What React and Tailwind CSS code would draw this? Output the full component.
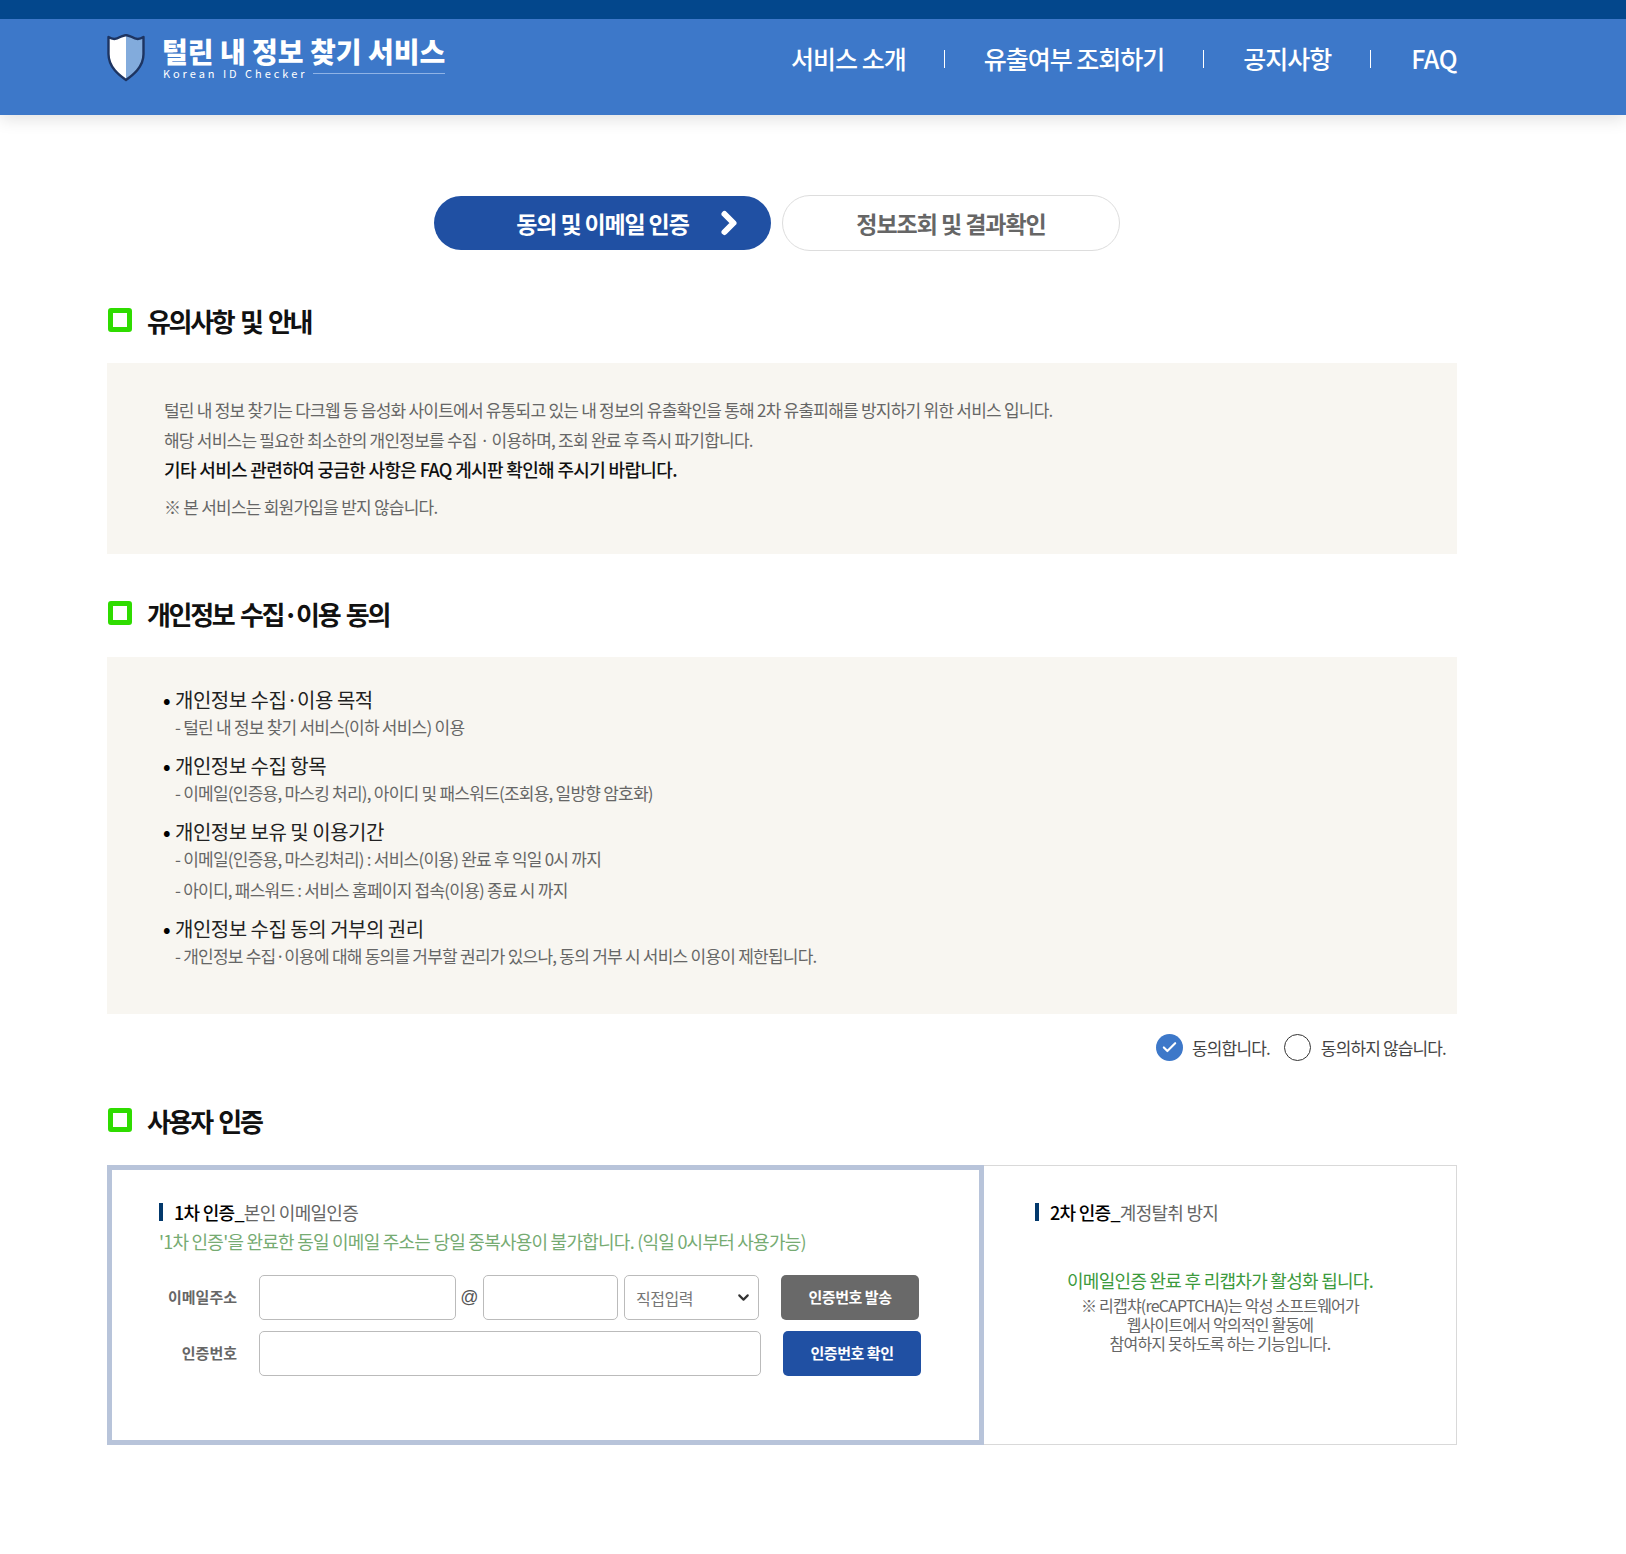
import React from "react";
import { ChevronRight, ChevronDown, Check } from "lucide-react";

const Shield = () => (
  <svg width="38" height="48" viewBox="0 0 38 48" className="shrink-0">
    <path d="M1.5 3 C6 5 9 5 12 3.5 C14.5 2.5 16.5 1.5 19 1 L19 46 C12 41 1.5 33 1.5 20 Z" fill="#ffffff" />
    <path d="M36.5 3 C32 5 29 5 26 3.5 C23.5 2.5 21.5 1.5 19 1 L19 46 C26 41 36.5 33 36.5 20 Z" fill="#82abdc" />
    <path d="M1.5 3 C6 6 10 5 13 3 C15 2 17 1.5 19 1 C21 1.5 23 2 25 3 C28 5 32 6 36.5 3 L36.5 20 C36.5 33 26 41 19 46 C12 41 1.5 33 1.5 20 Z" fill="none" stroke="#1d3461" strokeWidth="2.4" strokeLinejoin="round" />
  </svg>
);

const Heading = ({ children, className }) => (
  <div className={"flex items-center gap-[15px] pl-[1px] " + className}>
    <span className="mb-[3px] block h-[24px] w-[24px] rounded-[3px] border-[5px] border-[#2fdc00] bg-white" />
    <h2 className="m-0 text-[26px] leading-[36px] font-bold tracking-[-0.09em] [word-spacing:3px] text-[#111]">{children}</h2>
  </div>
);

const Bullet = ({ title, lines }) => (
  <div className="mb-[12px]">
    <div className="flex text-[20px] leading-[23px] tracking-[-0.025em] text-[#222]">
      <span className="w-[12px] font-bold text-black">•</span>
      {title}
    </div>
    {lines.map((l) => (
      <p key={l} className="m-0 pl-[12px] text-[17px] leading-[31px] tracking-[-0.045em] text-[#666]">{l}</p>
    ))}
  </div>
);

const SubTitle = ({ strong, rest }) => (
  <div className="flex items-center text-[18px] leading-[24px] tracking-[-0.04em]">
    <span className="mr-[11px] h-[18px] w-[4px] bg-[#03396c]" />
    <span className="font-medium text-black">{strong}</span>
    <span className="text-[#666]">{rest}</span>
  </div>
);

const inputCls = "h-[45px] rounded-[5px] border border-[#bbb] bg-white";

export default function App() {
  return (
    <div className="min-h-[1554px] bg-white font-['Noto_Sans_CJK_KR','Noto_Sans',sans-serif]">
      <header className="border-t-[19px] border-[#03478c] bg-[#3d78c9] pl-[107px] shadow-[0_4px_16px_rgba(0,0,0,0.12)]">
        <div className="flex h-[96px] w-[1350px] items-start justify-between">
          <div className="flex items-start gap-[17px] pt-[15px]">
            <Shield />
            <div className="-mt-[1px] w-[283px]">
              <div className="text-[28px] leading-[36px] font-black tracking-[0px] whitespace-nowrap text-white">털린 내 정보 찾기 서비스</div>
              <div className="-mt-[3px] flex items-center gap-[6px] pl-[1px]">
                <span className="text-[11px] leading-[14px] tracking-[0.27em] whitespace-nowrap text-white">Korean ID Checker</span>
                <span className="h-px flex-1 bg-[#8fb3e6]" />
              </div>
            </div>
          </div>
          <nav className="flex h-[80px] items-center text-[25px] font-medium tracking-[-0.04em] whitespace-nowrap text-white">
            <a className="pr-[38px]">서비스 소개</a>
            <span className="h-[18px] w-px bg-white" />
            <a className="px-[39px]">유출여부 조회하기</a>
            <span className="h-[18px] w-px bg-white" />
            <a className="px-[39px]">공지사항</a>
            <span className="h-[18px] w-px bg-white" />
            <a className="pl-[40px] tracking-[-0.02em]">FAQ</a>
          </nav>
        </div>
      </header>

      <main className="ml-[107px] w-[1350px]">
        <div className="flex items-center justify-center gap-[11px] pt-[80px] pr-[10px]">
          <div className="relative flex h-[54px] w-[337px] items-center justify-center rounded-full bg-[#2050a3] text-[23px] font-bold tracking-[-0.05em] text-white">
            동의 및 이메일 인증
            <ChevronRight className="absolute top-[9px] right-[24px]" size={36} strokeWidth={4} />
          </div>
          <div className="flex h-[56px] w-[338px] items-center justify-center rounded-full border border-[#ddd] bg-white text-[23px] font-bold tracking-[-0.045em] text-[#666]">
            정보조회 및 결과확인
          </div>
        </div>

        <Heading className="mt-[52px]">유의사항 및 안내</Heading>
        <section className="mt-[24px] h-[191px] bg-[#f8f6f1] pt-[32px] pr-[56px] pl-[57px]">
          <p className="m-0 text-[17px] leading-[30px] tracking-[-0.045em] text-[#666]">털린 내 정보 찾기는 다크웹 등 음성화 사이트에서 유통되고 있는 내 정보의 유출확인을 통해 2차 유출피해를 방지하기 위한 서비스 입니다.</p>
          <p className="m-0 text-[17px] leading-[30px] tracking-[-0.045em] text-[#666]">해당 서비스는 필요한 최소한의 개인정보를 수집ㆍ이용하며, 조회 완료 후 즉시 파기합니다.</p>
          <p className="m-0 text-[18px] leading-[28px] font-medium tracking-[-0.036em] text-[#111]">기타 서비스 관련하여 궁금한 사항은 FAQ 게시판 확인해 주시기 바랍니다.</p>
          <p className="m-0 mt-[9px] text-[17px] leading-[30px] tracking-[-0.045em] text-[#666]">※ 본 서비스는 회원가입을 받지 않습니다.</p>
        </section>

        <Heading className="mt-[42px]">개인정보 수집·이용 동의</Heading>
        <section className="mt-[25px] h-[357px] bg-[#f8f6f1] px-[56px] pt-[31px]">
          <Bullet title="개인정보 수집·이용 목적" lines={["- 털린 내 정보 찾기 서비스(이하 서비스) 이용"]} />
          <Bullet title="개인정보 수집 항목" lines={["- 이메일(인증용, 마스킹 처리), 아이디 및 패스워드(조회용, 일방향 암호화)"]} />
          <Bullet title="개인정보 보유 및 이용기간" lines={["- 이메일(인증용, 마스킹처리) : 서비스(이용) 완료 후 익일 0시 까지", "- 아이디, 패스워드 : 서비스 홈페이지 접속(이용) 종료 시 까지"]} />
          <Bullet title="개인정보 수집 동의 거부의 권리" lines={["- 개인정보 수집·이용에 대해 동의를 거부할 권리가 있으나, 동의 거부 시 서비스 이용이 제한됩니다."]} />
        </section>

        <div className="mt-[20px] flex items-center justify-end pr-[11px] text-[17px] tracking-[-0.05em] text-[#444]">
          <span className="flex h-[27px] w-[27px] items-center justify-center rounded-full bg-[#3d78c9]">
            <Check size={17} strokeWidth={3} className="text-white" />
          </span>
          <span className="mr-[14px] ml-[9px]">동의합니다.</span>
          <span className="h-[27px] w-[27px] rounded-full border border-[#333] bg-white" />
          <span className="ml-[10px]">동의하지 않습니다.</span>
        </div>

        <Heading className="mt-[42px]">사용자 인증</Heading>

        <section className="mt-[26px] flex h-[280px] border border-[#d9d9d9]">
          <div className="-my-px -ml-px h-[280px] w-[877px] shrink-0 border-[5px] border-[#b8c4da] bg-white pt-[30px] pl-[47px]">
            <SubTitle strong="1차 인증_" rest="본인 이메일인증" />
            <p className="m-0 mt-[3px] text-[18px] leading-[28px] tracking-[-0.042em] text-[#76ab72]">'1차 인증'을 완료한 동일 이메일 주소는 당일 중복사용이 불가합니다. (익일 0시부터 사용가능)</p>
            <div className="mt-[20px] flex items-center">
              <label className="w-[78px] shrink-0 text-right text-[15px] font-bold tracking-[0em] text-[#666]">이메일주소</label>
              <input className={inputCls + " ml-[22px] w-[197px]"} />
              <span className="w-[27px] text-center font-['Liberation_Sans'] text-[18px] text-[#555]">@</span>
              <input className={inputCls + " w-[135px]"} />
              <div className="relative ml-[6px] w-[135px]">
                <select className={inputCls + " w-full appearance-none pl-[11px] text-[16px] tracking-[-0.03em] text-[#777]"} defaultValue="직접입력">
                  <option>직접입력</option>
                </select>
                <ChevronDown className="pointer-events-none absolute top-[14px] right-[7px] text-[#333]" size={17} strokeWidth={3} />
              </div>
              <button className="ml-[22px] h-[45px] w-[138px] rounded-[5px] bg-[#696969] text-[15px] font-bold tracking-[-0.03em] text-white">인증번호 발송</button>
            </div>
            <div className="mt-[11px] flex items-center">
              <label className="w-[78px] shrink-0 text-right text-[15px] font-bold tracking-[0em] text-[#666]">인증번호</label>
              <input className={inputCls + " ml-[22px] w-[502px]"} />
              <button className="ml-[22px] h-[45px] w-[138px] rounded-[5px] bg-[#2050a3] text-[15px] font-bold tracking-[-0.03em] text-white">인증번호 확인</button>
            </div>
          </div>
          <div className="flex-1 pt-[34px] pl-[51px]">
            <SubTitle strong="2차 인증_" rest="계정탈취 방지" />
            <div className="mt-[42px] -ml-[51px] text-center">
              <p className="m-0 text-[18px] leading-[28px] tracking-[-0.04em] text-[#3c9a3c]">이메일인증 완료 후 리캡차가 활성화 됩니다.</p>
              <p className="m-0 mt-[2px] text-[16px] leading-[19px] tracking-[-0.05em] text-[#666]">※ 리캡챠(reCAPTCHA)는 악성 소프트웨어가<br />웹사이트에서 악의적인 활동에<br />참여하지 못하도록 하는 기능입니다.</p>
            </div>
          </div>
        </section>
      </main>
    </div>
  );
}
